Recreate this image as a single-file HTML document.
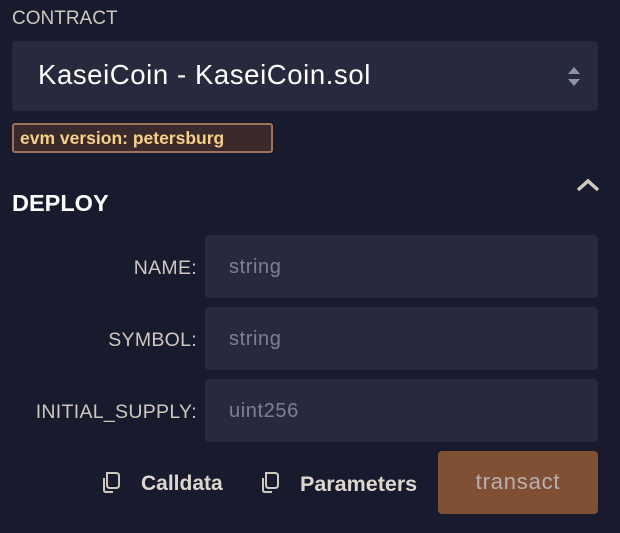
<!DOCTYPE html>
<html><head><style>
body{margin:0;width:620px;height:533px;background:#181a2d;font-family:"Liberation Sans",sans-serif;position:relative;overflow:hidden}
.a{position:absolute}
.lbl{color:#cfc8bd;font-size:19.5px;right:423px;text-align:right;letter-spacing:0.3px}
.in{left:205px;width:393px;height:63px;background:#272a3f;border-radius:4px;color:#7d8094;font-size:20px;line-height:65px;box-sizing:border-box;padding-left:24px;letter-spacing:0.6px}
</style></head><body>
<div class="a" style="left:12px;top:8px;color:#cfc8bd;font-size:19px">CONTRACT</div>
<div class="a" style="left:12px;top:41px;width:586px;height:70px;background:#272a3e;border-radius:4px"></div>
<div class="a" style="left:38px;top:59px;color:#fff;font-size:27.5px;letter-spacing:0.6px">KaseiCoin - KaseiCoin.sol</div>
<svg class="a" style="left:566px;top:64px" width="16" height="26"><path d="M2 10 L8 3 L14 10Z M2 15 L8 22 L14 15Z" fill="#8e93ad"/></svg>
<div class="a" style="left:12px;top:123px;height:26px;border:2px solid #a0725c;border-radius:3px;background:#3a2a2c;color:#f6d087;font-weight:bold;font-size:17.5px;line-height:27px;padding-left:6px;width:251px">evm version: petersburg</div>
<svg class="a" style="left:576px;top:177px" width="24" height="16"><path d="M2 13 L12 4 L22 13" stroke="#cfc8bd" stroke-width="3.5" fill="none"/></svg>
<div class="a" style="left:12px;top:190px;color:#fff;font-size:23.5px;font-weight:bold">DEPLOY</div>
<div class="a lbl" style="top:257px">NAME:</div>
<div class="a in" style="top:235px">string</div>
<div class="a lbl" style="top:329px">SYMBOL:</div>
<div class="a in" style="top:307px">string</div>
<div class="a lbl" style="top:401px">INITIAL_SUPPLY:</div>
<div class="a in" style="top:379px">uint256</div>
<svg class="a" style="left:100px;top:471px" width="22" height="24"><path d="M7 2 H16 Q19 2 19 5 V14 Q19 17 16 17 H10 Q7 17 7 14Z M4 7 V19 Q4 21 6 21 H13" stroke="#cfc8bd" stroke-width="2" fill="none"/></svg>
<div class="a" style="left:141px;top:472px;color:#dcd6cc;font-size:21px;font-weight:bold">Calldata</div>
<svg class="a" style="left:259px;top:471px" width="22" height="24"><path d="M7 2 H16 Q19 2 19 5 V14 Q19 17 16 17 H10 Q7 17 7 14Z M4 7 V19 Q4 21 6 21 H13" stroke="#cfc8bd" stroke-width="2" fill="none"/></svg>
<div class="a" style="left:300px;top:472px;color:#dcd6cc;font-size:21.5px;font-weight:bold">Parameters</div>
<div class="a" style="left:438px;top:451px;width:160px;height:63px;background:#7f5034;border-radius:4px;color:#b9b0b0;font-size:22px;letter-spacing:0.8px;line-height:62px;text-align:center">transact</div>
</body></html>
